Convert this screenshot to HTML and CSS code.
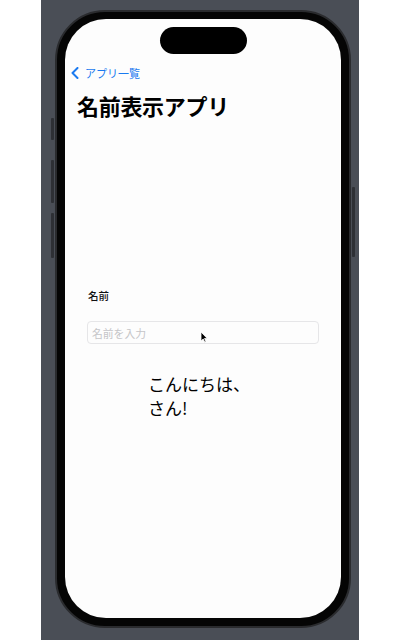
FILE: index.html
```html
<!DOCTYPE html>
<html lang="ja">
<head>
<meta charset="utf-8">
<link rel="stylesheet" href="styles.css">
</head>
<body>
<div class="stage">
  <div class="phone">
    <span class="btn btn-action"></span>
    <span class="btn btn-vol-up"></span>
    <span class="btn btn-vol-down"></span>
    <span class="btn btn-power"></span>
    <div class="screen">
      <div class="island"></div>
      <div class="nav-back">
        <svg class="chev" width="8" height="12" viewBox="0 0 8 12"><path d="M6.5 1 L1.5 6 L6.5 11" fill="none" stroke="#1a7af0" stroke-width="2" stroke-linecap="round" stroke-linejoin="round"/></svg>
        <span class="back-text">アプリ一覧</span>
      </div>
      <h1 class="title">名前表示アプリ</h1>
      <div class="label">名前</div>
      <div class="field">
        <span class="placeholder">名前を入力</span>
        <svg class="pointer" width="8" height="12" viewBox="0 0 8 12"><path d="M1 1 L1 10 L3.2 8 L4.8 11.2 L6 10.6 L4.5 7.5 L7.2 7.4 Z" fill="#000" stroke="#fff" stroke-width="0.8" stroke-linejoin="round"/></svg>
      </div>
      <p class="greeting">こんにちは、<br>さん!</p>
    </div>
  </div>
</div>
</body>
</html>
```
FILE: styles.css
```css
* { box-sizing: border-box; }
html, body { margin: 0; padding: 0; background: #ffffff; }
body { font-family: "Noto Sans CJK JP", "Noto Sans", sans-serif; }

.stage {
  margin-left: 41px;
  width: 318px;
  height: 640px;
  background: #4a4e56;
  padding-top: 10px;
  padding-left: 14px;
}

.phone {
  position: relative;
  width: 296px;
  height: 618px;
  border-radius: 50px;
  background: #050505;
  border: 2px solid #2a2b2e;
  padding: 7px 8px 8px 8px;
}

.btn {
  position: absolute;
  width: 3px;
  background: #2e3035;
  border-radius: 1px;
}
.btn-action { left: -6px; top: 106px; height: 22px; }
.btn-vol-up { left: -6px; top: 148px; height: 43px; }
.btn-vol-down { left: -6px; top: 201px; height: 45px; }
.btn-power { right: -6px; top: 175px; height: 70px; }

.screen {
  position: relative;
  height: 100%;
  background: #fdfdfd;
  border-radius: 41px;
  padding-top: 46px;
  overflow: hidden;
}

.island {
  position: absolute;
  top: 8px;
  left: 95px;
  width: 87px;
  height: 27px;
  border-radius: 14px;
  background: #000;
}

.nav-back {
  display: flex;
  align-items: center;
  gap: 6px;
  height: 16px;
  padding-left: 6px;
}
.chev { display: block; }
.back-text {
  font-size: 11px;
  line-height: 16px;
  color: #1a7af0;
}

.title {
  margin: 10px 0 0 12px;
  font-size: 22px;
  line-height: 28px;
  font-weight: 700;
  color: #000;
  letter-spacing: -0.3px;
}

.label {
  margin: 170px 0 0 23px;
  font-size: 10.5px;
  line-height: 14px;
  font-weight: 500;
  color: #111;
}

.field {
  position: relative;
  margin: 18px 0 0 22px;
  width: 232px;
  height: 23px;
  border: 1px solid #e6e6e8;
  border-radius: 4px;
  padding-left: 4px;
  display: flex;
  align-items: center;
}
.placeholder {
  font-size: 10.8px;
  line-height: 14px;
  color: #c5c5c8;
}
.pointer {
  position: absolute;
  left: 112px;
  top: 9px;
}

.greeting {
  margin: 28px 0 0 83px;
  font-size: 17px;
  line-height: 24px;
  color: #000;
}
```
